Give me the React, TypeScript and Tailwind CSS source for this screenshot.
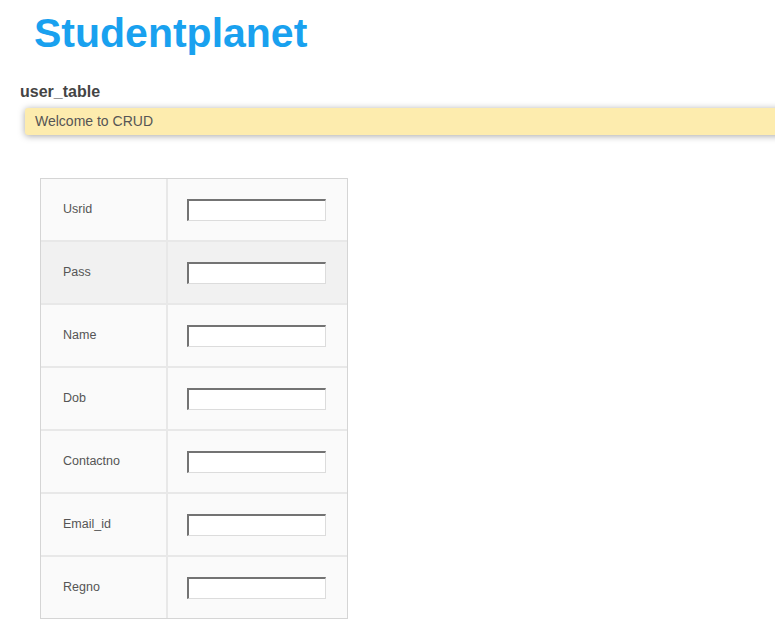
import React from 'react';

const fields = ['Usrid', 'Pass', 'Name', 'Dob', 'Contactno', 'Email_id', 'Regno'];

export default function App() {
  return (
    <div className="h-screen w-screen overflow-hidden bg-white font-['Liberation_Sans',Arial,sans-serif]">
      <h1 className="pl-[34px] pt-[10px] text-[41px] font-bold leading-[46px] text-[#19a1ef]">
        Studentplanet
      </h1>

      <h2 className="mt-[26px] pl-[20px] text-[16px] font-bold leading-[20px] text-[#444]">user_table</h2>

      <div className="ml-[25px] mt-[6px] h-[27px] w-[800px] rounded-l-[3px] bg-[#fdecae] pl-[10px] text-[14px] leading-[27px] text-[#555] shadow-[0_1px_7px_rgba(0,0,0,0.35)]">
        Welcome to CRUD
      </div>

      <div className="ml-[40px] mt-[43px] w-[308px] border border-[#d5d5d5] bg-[#e8e8e8]">
        <div className="grid grid-cols-[125px_179px] gap-[2px]">
          {fields.map((f, i) => (
            <React.Fragment key={f}>
              <div
                className={`flex h-[61px] items-center pl-[22px] text-[12.5px] text-[#555] ${
                  i === 1 ? 'bg-[#f1f1f1]' : 'bg-[#fafafa]'
                }`}
              >
                {f}
              </div>
              <div className={`flex h-[61px] items-center pl-[19px] ${i === 1 ? 'bg-[#f1f1f1]' : 'bg-[#fafafa]'}`}>
                <input
                  type="text"
                  className="h-[22px] w-[139px] border-t-2 border-l-2 border-r border-b border-t-[#737373] border-l-[#737373] border-r-[#dcdcdc] border-b-[#dcdcdc] bg-white outline-none"
                />
              </div>
            </React.Fragment>
          ))}
        </div>
      </div>
    </div>
  );
}
